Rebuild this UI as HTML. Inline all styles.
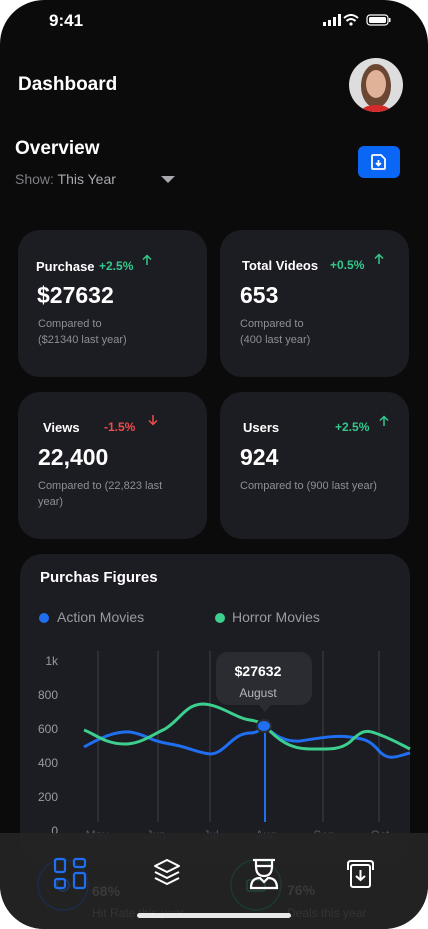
<!DOCTYPE html>
<html><head><style>
*{margin:0;padding:0;box-sizing:border-box}
body{width:428px;height:929px;background:#fff;font-family:"Liberation Sans",sans-serif;overflow:hidden}
.ph{position:absolute;left:0;top:0;width:428px;height:929px;background:#0b0b0c;border-radius:44px;overflow:hidden;color:#fff}
.a{position:absolute}
.card{position:absolute;background:#1c1c23;border-radius:22px}
.lbl{font-size:13px;font-weight:bold}
.big{font-size:23px;font-weight:bold}
.sm{font-size:11px;color:#8e8e95;line-height:16px}
.g{color:#34c98a;font-size:12px;font-weight:bold}
.r{color:#ef4c4c;font-size:12px;font-weight:bold}
</style></head><body><div class="ph">
<div class="a" style="left:49px;top:11px;font-size:17px;font-weight:bold">9:41</div>
<svg class="a" style="left:323px;top:14px" width="68" height="14">
<rect x="0" y="8" width="3" height="4" fill="#fff"/><rect x="5" y="6" width="3" height="6" fill="#fff"/><rect x="10" y="3" width="3" height="9" fill="#fff"/><rect x="15" y="0" width="3" height="12" fill="#fff"/>
<path d="M21 4 Q28 -2 35 4 M23.5 7 Q28 3 32.5 7" stroke="#fff" stroke-width="2" fill="none"/><circle cx="28" cy="10" r="1.6" fill="#fff"/>
<rect x="44" y="1" width="21" height="10" rx="3" fill="none" stroke="#fff" stroke-width="1.2"/><rect x="46" y="3" width="17" height="6" rx="1.5" fill="#fff"/><rect x="66" y="4" width="1.5" height="4" fill="#fff"/>
</svg>
<div class="a" style="left:18px;top:74px;font-size:19px;font-weight:bold">Dashboard</div>
<div class="a" style="left:349px;top:58px;width:54px;height:54px;border-radius:50%;background:#ddd;overflow:hidden">
<div class="a" style="left:12px;top:6px;width:30px;height:44px;border-radius:50%;background:#6b4632"></div>
<div class="a" style="left:17px;top:12px;width:20px;height:28px;border-radius:50%;background:#e0b298"></div>
<div class="a" style="left:12px;top:47px;width:30px;height:14px;border-radius:50% 50% 0 0;background:#d52a2a"></div></div>
<div class="a" style="left:15px;top:138px;font-size:19px;font-weight:bold">Overview</div>
<div class="a" style="left:15px;top:171px;font-size:14px;color:#7d7d82">Show: <span style="color:#a8a8ad">This Year</span></div>
<div class="a" style="left:161px;top:176px;border-left:7px solid transparent;border-right:7px solid transparent;border-top:7px solid #a8a8ad"></div>
<div class="a" style="left:358px;top:146px;width:42px;height:32px;border-radius:6px;background:#0a66f5"></div>
<svg class="a" style="left:368px;top:152px" width="22" height="20"><path d="M5 3 H13 L17 7 V16 Q17 17 16 17 H5 Q4 17 4 16 V4 Q4 3 5 3Z" fill="none" stroke="#fff" stroke-width="1.8"/><path d="M10.5 8 V13 M8 11 L10.5 13.5 L13 11" stroke="#fff" stroke-width="1.8" fill="none"/></svg>

<div class="card" style="left:18px;top:230px;width:189px;height:147px"></div>
<div class="card" style="left:220px;top:230px;width:189px;height:147px"></div>
<div class="card" style="left:18px;top:392px;width:189px;height:147px"></div>
<div class="card" style="left:220px;top:392px;width:189px;height:147px"></div>
<svg class="a" style="left:0;top:0" width="428" height="540" fill="none" stroke-width="1.5">
<path d="M147 265 V256 M143 259.5 L147 255.5 L151 259.5" stroke="#34c98a"/>
<path d="M379 264 V255 M375 258.5 L379 254.5 L383 258.5" stroke="#34c98a"/>
<path d="M384 426 V417 M380 420.5 L384 416.5 L388 420.5" stroke="#34c98a"/>
<path d="M153 415 V424 M149 420.5 L153 424.5 L157 420.5" stroke="#ef4c4c"/>
</svg>
<div class="a lbl" style="left:36px;top:259px">Purchase</div><div class="a g" style="left:99px;top:259px">+2.5%</div>
<div class="a big" style="left:37px;top:282px">$27632</div>
<div class="a sm" style="left:38px;top:316px">Compared to<br>($21340 last year)</div>
<div class="a lbl" style="left:242px;top:258px">Total Videos</div><div class="a g" style="left:330px;top:258px">+0.5%</div>
<div class="a big" style="left:240px;top:282px">653</div>
<div class="a sm" style="left:240px;top:316px">Compared to<br>(400 last year)</div>
<div class="a lbl" style="left:43px;top:420px">Views</div><div class="a r" style="left:104px;top:420px">-1.5%</div>
<div class="a big" style="left:38px;top:444px">22,400</div>
<div class="a sm" style="left:38px;top:478px">Compared to (22,823 last<br>year)</div>
<div class="a lbl" style="left:243px;top:420px">Users</div><div class="a g" style="left:335px;top:420px">+2.5%</div>
<div class="a big" style="left:240px;top:444px">924</div>
<div class="a sm" style="left:240px;top:478px">Compared to (900 last year)</div>

<div class="card" style="left:20px;top:554px;width:390px;height:310px"></div>
<div class="a" style="left:40px;top:569px;font-size:15px;font-weight:bold">Purchas Figures</div>
<div class="a" style="left:39px;top:613px;width:10px;height:10px;border-radius:50%;background:#1f6ff0"></div>
<div class="a" style="left:57px;top:609px;font-size:14px;color:#9a9aa0">Action Movies</div>
<div class="a" style="left:215px;top:613px;width:10px;height:10px;border-radius:50%;background:#3ccf8e"></div>
<div class="a" style="left:232px;top:609px;font-size:14px;color:#9a9aa0">Horror Movies</div>
<svg class="a" style="left:0;top:640px" width="428" height="210" font-family="Liberation Sans" font-size="12" fill="#9a9aa0">
<g transform="translate(0,-640)">
<text x="58" y="665" text-anchor="end">1k</text><text x="58" y="699" text-anchor="end">800</text><text x="58" y="733" text-anchor="end">600</text><text x="58" y="767" text-anchor="end">400</text><text x="58" y="801" text-anchor="end">200</text><text x="58" y="835" text-anchor="end">0</text>
<g stroke="#3f3f46" stroke-width="1"><line x1="98" y1="651" x2="98" y2="822"/><line x1="158" y1="651" x2="158" y2="822"/><line x1="210" y1="651" x2="210" y2="822"/><line x1="323" y1="651" x2="323" y2="822"/><line x1="379" y1="651" x2="379" y2="822"/></g>
<line x1="265" y1="726" x2="265" y2="822" stroke="#1f6ff0" stroke-width="2"/>
<path d="M84 747 C100 738 115 731 130 732 C145 734 150 741 170 744 C185 746 198 753 210 754 C225 754 232 733 250 733 C260 733 262 726 265 726 C275 736 285 742 300 741 C320 738 335 735 350 737 C365 739 370 740 380 752 C390 762 400 755 410 753" fill="none" stroke="#1f6ff0" stroke-width="3"/>
<path d="M84 730 C95 734 105 744 125 744 C140 744 150 736 165 729 C180 720 185 705 202 704 C220 704 235 718 250 720 C258 721 262 724 265 726 C278 740 290 749 310 749 C330 749 340 750 350 742 C360 732 365 729 375 733 C390 738 400 744 410 749" fill="none" stroke="#3ccf8e" stroke-width="3"/>
<rect x="216" y="652" width="96" height="53" rx="12" fill="#2b2c32"/>
<path d="M258 704 L265 712 L272 704Z" fill="#2b2c32"/>
<text x="258" y="676" fill="#fff" font-size="14" font-weight="bold" text-anchor="middle">$27632</text>
<text x="258" y="697" fill="#b8b8bd" font-size="12" text-anchor="middle">August</text>
<ellipse cx="264" cy="726" rx="7" ry="6" fill="#1f6ff0" stroke="#2b2c32" stroke-width="2"/>
<g fill="#5a5a60"><text x="97" y="839" text-anchor="middle">May</text><text x="156" y="839" text-anchor="middle">Jun</text><text x="211" y="839" text-anchor="middle">Jul</text><text x="266" y="839" text-anchor="middle">Aug</text><text x="324" y="839" text-anchor="middle">Sep</text><text x="380" y="839" text-anchor="middle">Oct</text></g>
</g></svg>
<div class="a" style="left:0;top:833px;width:428px;height:96px;background:rgba(36,36,37,0.95)"></div>
<svg class="a" style="left:0;top:833px" width="428" height="96" fill="none">
<circle cx="63" cy="52" r="25" stroke="#1a2c4a" stroke-width="1.5"/><circle cx="63" cy="52" r="6" stroke="#1e3a66" stroke-width="1.5"/>
<circle cx="256" cy="52" r="25" stroke="#1b3a2e" stroke-width="1.5"/><rect x="247" y="47" width="18" height="11" rx="2" stroke="#1e4a36" stroke-width="1.5"/>
</svg>
<div class="a" style="left:92px;top:883px;font-size:14px;font-weight:bold;color:#3a3a3c">68%</div>
<div class="a" style="left:92px;top:906px;font-size:12px;color:#343436">Hit Rate this year</div>
<div class="a" style="left:287px;top:882px;font-size:14px;font-weight:bold;color:#3a3a3c">76%</div>
<div class="a" style="left:287px;top:906px;font-size:12px;color:#343436">Deals this year</div>
<svg class="a" style="left:0;top:833px" width="428" height="96">
<g fill="none" stroke="#1f6ff0" stroke-width="2.2"><rect x="55" y="26" width="10" height="13" rx="2"/><rect x="74" y="26" width="11" height="8" rx="2"/><rect x="55" y="46" width="10" height="9" rx="2"/><rect x="74" y="40" width="11" height="15" rx="2"/></g>
<g fill="none" stroke="#fff" stroke-width="2" stroke-linejoin="round"><path d="M167 27 L179 33 L167 39 L155 33Z"/><path d="M155 39 L167 45 L179 39"/><path d="M155 45 L167 51 L179 45"/></g>
<g fill="none" stroke="#fff" stroke-width="2.2"><path d="M253 27 H275 M256 27 V33 M272 27 V33 M256 33 H272"/><path d="M256 33 Q256 43 264 43 Q272 43 272 33"/><path d="M251 55 Q251 45 260 45 L264 49 L268 45 Q277 45 277 55Z"/></g>
<g fill="none" stroke="#fff" stroke-width="2"><path d="M348 37 V31 Q348 28 351 28 H370 Q373 28 373 31 V37"/><rect x="351" y="32" width="19" height="22" rx="2"/><path d="M360.5 37 V47 M356 43 L360.5 47 L365 43"/></g>
<rect x="137" y="80" width="154" height="5" rx="2.5" fill="#e8e8e8"/>
</svg>
</div></body></html>
